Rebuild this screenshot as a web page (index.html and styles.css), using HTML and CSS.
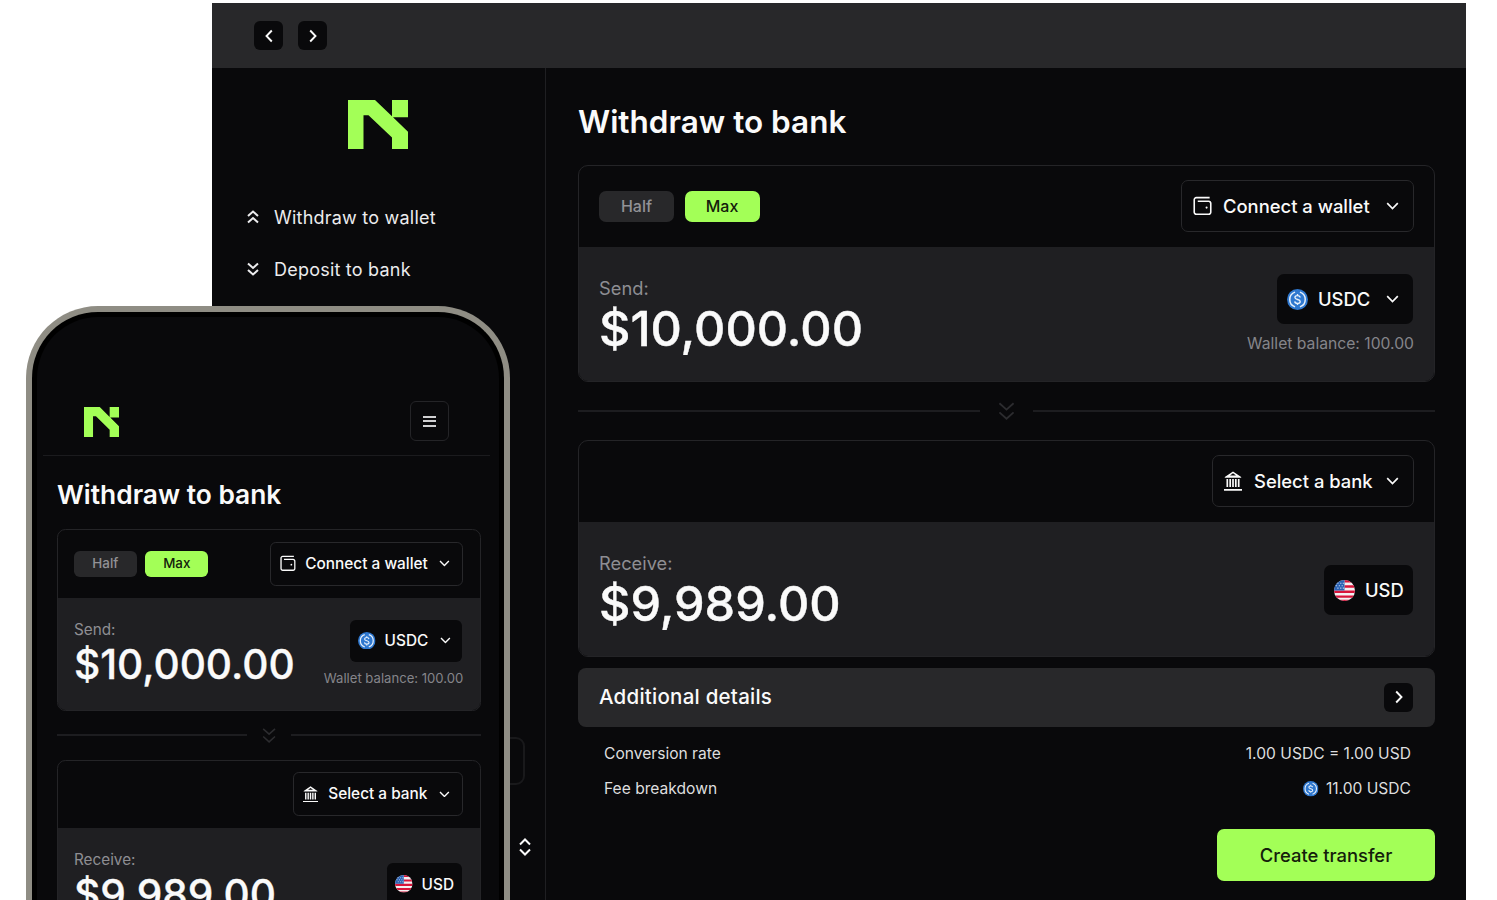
FILE: index.html
```html
<!DOCTYPE html>
<html lang="en">
<head>
  <meta charset="UTF-8" />
  <meta name="viewport" content="width=device-width, initial-scale=1.0" />
  <title>Withdraw to bank</title>
  <link rel="stylesheet" href="styles.css">
</head>
<body>

<!-- Shared icons -->
<svg class="sprite" width="0" height="0">
  <symbol id="logo" viewBox="0 0 60 50" preserveAspectRatio="none">
    <path d="M0 0H27L44 16.5V0H60V17.5H45L60 32V50H44V38L20.5 15.5H15.5V50H0Z" fill="#a3ff57" />
  </symbol>
  <symbol id="down" viewBox="0 0 12 8"><path d="M.7 1.2 6 6.5l5.300-5.300" /></symbol>
  <symbol id="left" viewBox="0 0 8 14"><path d="M6.800 1.500 1.500 7l5.300 5.500" /></symbol>
  <symbol id="right" viewBox="0 0 8 14"><path d="M1.200 1.500 6.500 7l-5.300 5.500" /></symbol>
  <symbol id="dbl-down" viewBox="0 0 12 14"><path d="M1 1.500 6 6l5-4.500M1 8l5 4.500L11 8" /></symbol>
  <symbol id="dbl-up" viewBox="0 0 12 14"><path d="M1 6l5-4.500L11 6M1 12.500 6 8l5 4.500" /></symbol>
  <symbol id="wallet" viewBox="0 0 20 20">
    <path d="M17.500 1.200H3.500a2.200 2.200 0 0 0-2.200 2.200V16.500a2.200 2.200 0 0 0 2.200 2.200H16.500a2.200 2.200 0 0 0 2.200-2.200V7.200A2.200 2.200 0 0 0 16.500 5H5" />
    <circle cx="14.300" cy="11.700" r="1.100" fill="currentColor" stroke="none" />
  </symbol>
  <symbol id="bank" viewBox="0 0 18 20">
    <path d="M.8 6 9 .4 17.200 6v.7H.8ZM0 18h18v1.700H0Z" fill="currentColor" stroke="none" />
    <path d="M9 2.300 12 4.600H6Z" fill="#09090b" stroke="none" />
    <path d="M3.300 8v8M6.200 8v8M9 8v8M11.800 8v8M14.700 8v8" />
  </symbol>
  <symbol id="usdc" viewBox="0 0 32 32">
    <circle cx="16" cy="16" r="16" fill="#2f78cf" stroke="none" />
    <path d="M12.300 4.800a11.800 11.800 0 0 0 0 22.400M19.700 4.800a11.800 11.800 0 0 1 0 22.400" stroke="#e6effa" stroke-width="2.300" />
    <path d="M20 13c-.2-2-1.700-2.900-4-2.900s-3.900 1.100-3.900 2.900c0 4 8 2 8 6 0 1.900-1.600 3-4.100 3s-4-1-4.200-3.100M16 7.700v2.400M16 22v2.400" stroke="#e6effa" stroke-width="2.100" />
  </symbol>
  <symbol id="flag" viewBox="0 0 22 22">
    <clipPath id="round"><circle cx="11" cy="11" r="11" /></clipPath>
    <g clip-path="url(#round)" stroke="none">
      <path d="M0 0h22v22H0Z" fill="#f4f0f2" />
      <path d="M11 0h11v2.500H11ZM11 5.500h11v2.700H11ZM0 11h22v2.700H0ZM0 16.200h22v2.500H0Z" fill="#d8143a" />
      <path d="M0 20.800h22V22H0Z" fill="#d8143a" />
      <path d="M0 0h11v11H0Z" fill="#2a62b4" />
      <path d="M3.500 3.500h1.200M6.500 3.500h1.200M9.200 3.500h1.200M2 6h1.200M5 6h1.200M8 6h1.200M3.500 8.500h1.200M6.500 8.500h1.200M9.200 8.500h1.200" stroke="#c5d5ec" stroke-width="1.100" />
    </g>
  </symbol>
</svg>

<!-- Desktop window -->
<div class="desktop">
  <div class="titlebar">
    <button class="square"><svg class="arrow"><use href="#left" /></svg></button>
    <button class="square"><svg class="arrow"><use href="#right" /></svg></button>
  </div>
  <div class="window-body">
    <div class="sidebar">
      <svg class="logo"><use href="#logo" /></svg>
      <div class="nav">
        <a><svg class="nav-icon"><use href="#dbl-up" /></svg>Withdraw to wallet</a>
        <a><svg class="nav-icon"><use href="#dbl-down" /></svg>Deposit to bank</a>
      </div>
      <div class="side-box"></div>
      <svg class="sorter" viewBox="0 0 12 18"><path d="M1 6.500 6 1.500l5 5M1 11.500l5 5 5-5" /></svg>
    </div>

    <div class="main">
      <h1>Withdraw to bank</h1>
      <div class="card">
        <div class="card-head">
          <div class="pills"><span class="pill">Half</span><span class="pill active">Max</span></div>
          <button class="select wide"><svg class="wallet"><use href="#wallet" /></svg><span>Connect a wallet</span><svg class="chevron"><use href="#down" /></svg></button>
        </div>
        <div class="card-body">
          <div>
            <p class="label">Send:</p>
            <p class="amount">$10,000.00</p>
          </div>
          <div class="side">
            <button class="coin usdc"><svg class="token"><use href="#usdc" /></svg><span>USDC</span><svg class="chevron"><use href="#down" /></svg></button>
            <p class="balance">Wallet balance: 100.00</p>
          </div>
        </div>
      </div>

      <div class="divider"><svg><use href="#dbl-down" /></svg></div>

      <div class="card">
        <div class="card-head">
          <div></div>
          <button class="select"><svg class="bank"><use href="#bank" /></svg><span>Select a bank</span><svg class="chevron"><use href="#down" /></svg></button>
        </div>
        <div class="card-body">
          <div>
            <p class="label">Receive:</p>
            <p class="amount">$9,989.00</p>
          </div>
          <div class="side usd-side">
            <button class="coin"><svg class="token"><use href="#flag" /></svg><span>USD</span></button>
          </div>
        </div>
      </div>

      <div class="details">
        <span>Additional details</span>
        <button class="square"><svg class="arrow"><use href="#right" /></svg></button>
      </div>
      <div class="rows">
        <div class="row"><span>Conversion rate</span><span>1.00 USDC = 1.00 USD</span></div>
        <div class="row"><span>Fee breakdown</span><span class="fee"><svg><use href="#usdc" /></svg>11.00 USDC</span></div>
      </div>
      <button class="create">Create transfer</button>
    </div>
  </div>
</div>

<!-- Phone -->
<div class="phone">
  <div class="screen">
    <div class="phone-bar">
      <svg class="logo"><use href="#logo" /></svg>
      <button class="menu"><i></i><i></i><i></i></button>
    </div>
    <div class="main">
      <h1>Withdraw to bank</h1>
      <div class="card">
        <div class="card-head">
          <div class="pills"><span class="pill">Half</span><span class="pill active">Max</span></div>
          <button class="select wide"><svg class="wallet"><use href="#wallet" /></svg><span>Connect a wallet</span><svg class="chevron"><use href="#down" /></svg></button>
        </div>
        <div class="card-body">
          <div>
            <p class="label">Send:</p>
            <p class="amount">$10,000.00</p>
          </div>
          <div class="side">
            <button class="coin usdc"><svg class="token"><use href="#usdc" /></svg><span>USDC</span><svg class="chevron"><use href="#down" /></svg></button>
            <p class="balance">Wallet balance: 100.00</p>
          </div>
        </div>
      </div>

      <div class="divider"><svg><use href="#dbl-down" /></svg></div>

      <div class="card">
        <div class="card-head">
          <div></div>
          <button class="select"><svg class="bank"><use href="#bank" /></svg><span>Select a bank</span><svg class="chevron"><use href="#down" /></svg></button>
        </div>
        <div class="card-body">
          <div>
            <p class="label">Receive:</p>
            <p class="amount">$9,989.00</p>
          </div>
          <div class="side usd-side">
            <button class="coin"><svg class="token"><use href="#flag" /></svg><span>USD</span></button>
          </div>
        </div>
      </div>
    </div>
  </div>
</div>

</body>
</html>
```
FILE: styles.css
```css
* { margin: 0; padding: 0; box-sizing: border-box; }

body {
  position: relative;
  width: 1497px;
  height: 900px;
  overflow: hidden;
  background: #fff;
  font-family: Inter, sans-serif;
  color: #fafafa;
}

button {
  font-family: inherit;
  color: inherit;
  border: none;
  background: #09090b;
}

svg {
  display: block;
  flex: none;
  fill: none;
  stroke: currentColor;
  stroke-width: 1.7;
}

.sprite { position: absolute; }

/* --s is the unit of the transfer form, the phone shrinks it */
.desktop {
  --s: 1px;
  position: absolute;
  left: 212px;
  top: 3px;
  width: 1254px;
  height: 897px;
  display: flex;
  flex-direction: column;
  background: #09090b;
}

.titlebar {
  height: 65px;
  flex: none;
  display: flex;
  gap: 15px;
  padding: 18px 42.4px;
  background: #28282a;
}

.square {
  width: 29px;
  height: 29px;
  border-radius: 6px;
  display: flex;
  align-items: center;
  justify-content: center;
}

.arrow { width: 8px; height: 14px; stroke-width: 1.9; }

.window-body { flex: 1; display: flex; }

.sidebar {
  width: 334px;
  border-right: 1px solid #1f1f22;
  display: flex;
  flex-direction: column;
  padding: 31.5px 14px 0 35px;
}

.sidebar .logo {
  width: 60px;
  height: 49.5px;
  margin-left: 101px;
  stroke: none;
}

.nav {
  display: flex;
  flex-direction: column;
  gap: 28px;
  margin-top: 56px;
}

.nav a {
  display: flex;
  align-items: center;
  height: 24px;
  gap: 15px;
  font-size: 18px;
  letter-spacing: 0.22px;
  color: #ececee;
}

.nav-icon { width: 12px; height: 14px; stroke-width: 2; }

.side-box {
  height: 48px;
  margin: 456px 6px 0 0;
  border: 2px solid #19191b;
  border-radius: 9px;
}

.sorter {
  width: 12px;
  height: 18px;
  margin: 53px 0 0 auto;
  stroke-width: 2;
}

.desktop .main {
  flex: 1;
  display: flex;
  flex-direction: column;
  padding: 34px 31px 0 32px;
}

h1 {
  font-size: calc(var(--s) * 31.5);
  line-height: calc(var(--s) * 40);
  font-weight: 600;
  margin-bottom: calc(var(--s) * 23);
}

.card {
  border: 1px solid #242427;
  border-radius: calc(var(--s) * 10);
  overflow: hidden;
}

.card-head {
  height: calc(var(--s) * 81);
  display: flex;
  align-items: center;
  justify-content: space-between;
  padding: 0 calc(var(--s) * 20);
}

.desktop .card-head { padding-bottom: 1px; }

.pills { display: flex; gap: calc(var(--s) * 10.5); }

.pill {
  width: calc(var(--s) * 75);
  height: calc(var(--s) * 31);
  line-height: calc(var(--s) * 31);
  border-radius: calc(var(--s) * 7);
  background: #28282a;
  color: #929296;
  font-size: calc(var(--s) * 16);
  font-weight: 500;
  text-align: center;
}

.pill.active { background: #a3ff57; color: #14200b; }

.select {
  height: calc(var(--s) * 52);
  display: flex;
  align-items: center;
  padding: 0 calc(var(--s) * 14) 0 calc(var(--s) * 11);
  border: 1px solid #28282b;
  border-radius: calc(var(--s) * 7);
  font-size: calc(var(--s) * 18.4);
  font-weight: 500;
  width: calc(var(--s) * 202);
}

.select.wide { width: calc(var(--s) * 233); }

.wallet, .bank {
  width: calc(var(--s) * 18);
  height: calc(var(--s) * 20);
  margin-right: calc(var(--s) * 12);
}

.wallet { width: calc(var(--s) * 19); margin-right: calc(var(--s) * 11); }

.chevron {
  width: calc(var(--s) * 13);
  height: calc(var(--s) * 8);
  margin-left: auto;
}

.card-body {
  height: calc(var(--s) * 134);
  display: flex;
  justify-content: space-between;
  padding: calc(var(--s) * 27) calc(var(--s) * 20) 0;
  background: #1f1f22;
}

.label {
  font-size: calc(var(--s) * 18.3);
  line-height: calc(var(--s) * 28);
  color: #8e8e93;
}

.amount {
  font-size: calc(var(--s) * 48.6);
  line-height: calc(var(--s) * 54);
  font-weight: 500;
  -webkit-text-stroke: calc(var(--s) * 0.4) #fafafa;
}

.side {
  display: flex;
  flex-direction: column;
  align-items: flex-end;
}

.usd-side { padding-top: calc(var(--s) * 16); }

.coin {
  height: calc(var(--s) * 50);
  width: calc(var(--s) * 89);
  margin-right: 1px;
  display: flex;
  align-items: center;
  padding: 0 calc(var(--s) * 14) 0 calc(var(--s) * 9.5);
  border-radius: calc(var(--s) * 7);
  font-size: calc(var(--s) * 18.4);
  font-weight: 500;
}

.coin.usdc { width: calc(var(--s) * 136); }

.token {
  width: calc(var(--s) * 21);
  height: calc(var(--s) * 21);
  margin-right: calc(var(--s) * 10.5);
}

.balance {
  margin-top: calc(var(--s) * 9.6);
  font-size: calc(var(--s) * 15.7);
  line-height: calc(var(--s) * 20);
  color: #85858a;
}

.divider {
  height: calc(var(--s) * 58);
  display: flex;
  align-items: center;
  gap: calc(var(--s) * 18);
  color: #2c2c2f;
}

.divider::before, .divider::after {
  content: "";
  flex: 1;
  height: 2px;
  background: #1d1d20;
}

.divider svg { width: calc(var(--s) * 17); height: calc(var(--s) * 20); stroke-width: 1.3; }

.details {
  height: 59px;
  margin-top: 11px;
  display: flex;
  align-items: center;
  justify-content: space-between;
  padding: 0 22px 2px 21px;
  border-radius: 8px;
  background: #28282a;
  font-size: 20.5px;
  font-weight: 500;
  letter-spacing: 0.24px;
}

.details .square { margin-top: 1px; }

.rows { padding: 8.5px 24px 0 26px; }

.row {
  height: 35px;
  display: flex;
  align-items: center;
  justify-content: space-between;
  font-size: 15.6px;
  color: #dededf;
}

.fee { display: flex; align-items: center; gap: 7px; }
.fee svg { width: 15.5px; height: 15.5px; margin-top: 2px; }

.create {
  width: 218px;
  height: 52px;
  margin: 23.5px 0 0 auto;
  border-radius: 7px;
  background: #a3ff57;
  color: #14200b;
  font-size: 18.4px;
  font-weight: 500;
}

.phone {
  --s: 0.836px;
  position: absolute;
  left: 26px;
  top: 306px;
  width: 484px;
  height: 594px;
  overflow: hidden;
  border: 6px solid #8f8d84;
  border-bottom: none;
  border-radius: 72px 72px 0 0;
  background: #000;
  padding: 5px 5px 0;
}

.screen {
  height: 100%;
  overflow: hidden;
  border-radius: 61px 61px 0 0;
  background: #09090b;
  padding: 84px 9px 0 6px;
}

.phone-bar {
  height: 55px;
  display: flex;
  justify-content: space-between;
  border-bottom: 1px solid #1b1b1e;
  padding: 0 41px;
}

.phone-bar .logo {
  width: 35px;
  height: 30px;
  margin-top: 6px;
  stroke: none;
}

.menu {
  width: 39px;
  height: 40px;
  border: 1px solid #242427;
  border-radius: 6px;
  display: flex;
  flex-direction: column;
  align-items: center;
  justify-content: center;
  gap: 2.5px;
}

.menu i { width: 13px; height: 2px; background: #d0d0d2; }

.phone .main { padding: 21.5px 9px 0 14px; }
.phone h1 { margin-bottom: 18.5px; }
.phone .card-head { padding: 0 17px 1px 16px; }
.phone .select { width: 170px; }
.phone .select.wide { width: 193px; }
.phone .card-body { padding-left: 16px; }
.phone .coin { padding-left: 8px; width: 75px; }
.phone .coin.usdc { width: 112px; }
.phone .label { margin: -2.5px 0 0.5px; }
.phone .side { margin-top: -1px; }
.phone .balance { margin-top: 8.5px; }
```
